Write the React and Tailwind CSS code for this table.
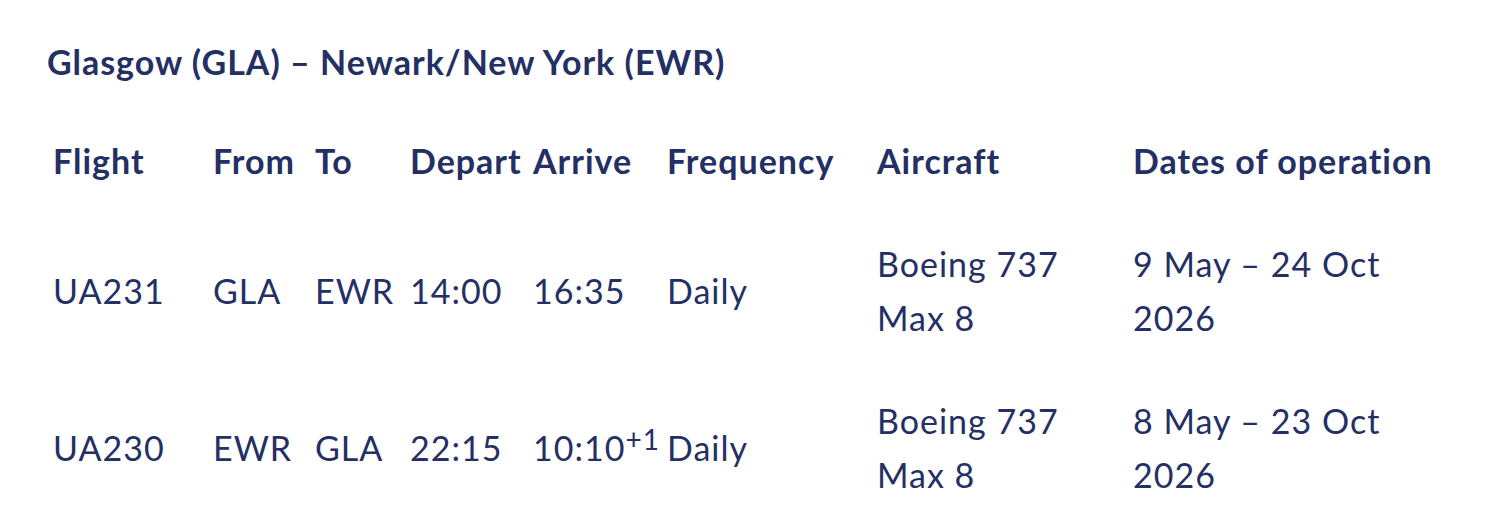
export default function App() {
  const rows = [
    { flight: "UA231", from: "GLA", to: "EWR", dep: "14:00", arr: "16:35", plus: false, d1: "9 May – 24 Oct" },
    { flight: "UA230", from: "EWR", to: "GLA", dep: "22:15", arr: "10:10", plus: true, d1: "8 May – 23 Oct" },
  ];
  const headers = ["Flight", "From", "To", "Depart", "Arrive", "Frequency", "Aircraft", "Dates of operation"];
  const widths = ["w-[160px]", "w-[102px]", "w-[95px]", "w-[123px]", "w-[134px]", "w-[210px]", "w-[256px]", "w-[330px]"];
  return (
    <div className="bg-white min-h-[516px] pt-[35px] pl-[47px] text-[#243064] tracking-[1px] font-['Lato','Noto_Sans',sans-serif]">
      <h2 className="text-[34px] leading-[1.6] font-bold">Glasgow (GLA) – Newark/New York (EWR)</h2>
      <table className="table-fixed w-[1410px] border-collapse mt-[21px] text-[34px] leading-[1.6] text-left">
        <colgroup>
          {widths.map((w, i) => (
            <col key={i} className={w} />
          ))}
        </colgroup>
        <thead>
          <tr>
            {headers.map((h) => (
              <th key={h} className="font-bold px-[6px] py-6 align-middle whitespace-nowrap">{h}</th>
            ))}
          </tr>
        </thead>
        <tbody>
          {rows.map((r) => (
            <tr key={r.flight}>
              <td className="px-[6px] py-6 align-middle">{r.flight}</td>
              <td className="px-[6px] py-6 align-middle">{r.from}</td>
              <td className="px-[6px] py-6 align-middle">{r.to}</td>
              <td className="px-[6px] py-6 align-middle">{r.dep}</td>
              <td className="px-[6px] py-6 align-middle whitespace-nowrap">
                {r.arr}
                {r.plus && <sup className="text-[28px] align-baseline relative top-[-11px] leading-none">+1</sup>}
              </td>
              <td className="px-[6px] py-6 align-middle">Daily</td>
              <td className="px-[6px] py-6 align-middle">
                Boeing 737<br />Max 8
              </td>
              <td className="px-[6px] py-6 align-middle">
                {r.d1}<br />2026
              </td>
            </tr>
          ))}
        </tbody>
      </table>
    </div>
  );
}
